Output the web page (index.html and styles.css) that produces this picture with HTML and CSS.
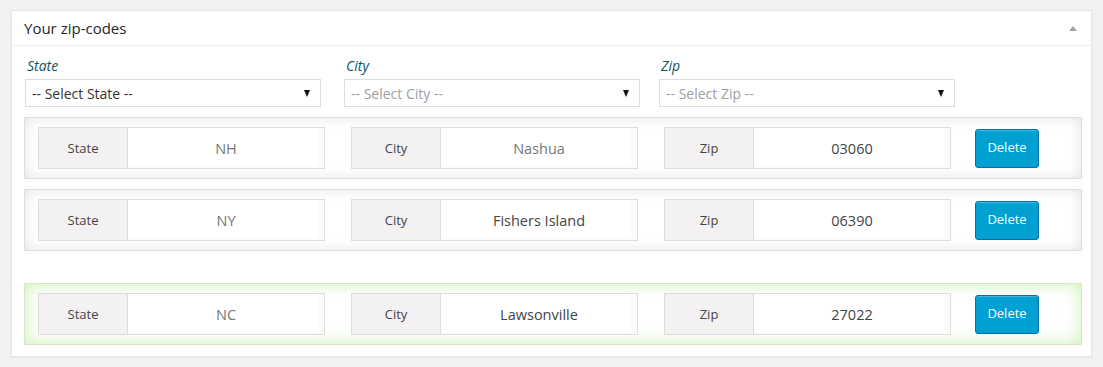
FILE: index.html
```html
<!DOCTYPE html>
<html>
<head>
  <meta charset="utf-8">
  <title>Your zip-codes</title>
  <link rel="stylesheet" href="styles.css">
</head>
<body>
  <div class="postbox">
    <div class="hndle">
      <span>Your zip-codes</span>
      <span class="toggle"></span>
    </div>
    <div class="inside">
      <div class="pickers">
        <div class="picker picker-state">
          <label>State</label>
          <div class="select">-- Select State --</div>
        </div>
        <div class="picker picker-city">
          <label>City</label>
          <div class="select disabled">-- Select City --</div>
        </div>
        <div class="picker picker-zip">
          <label>Zip</label>
          <div class="select disabled">-- Select Zip --</div>
        </div>
      </div>

      <div class="zip-row">
        <div class="group"><span class="addon">State</span><span class="value">NH</span></div>
        <div class="group"><span class="addon">City</span><span class="value">Nashua</span></div>
        <div class="group"><span class="addon">Zip</span><span class="value dark">03060</span></div>
        <button class="btn-delete">Delete</button>
      </div>
      <div class="zip-row">
        <div class="group"><span class="addon">State</span><span class="value">NY</span></div>
        <div class="group"><span class="addon">City</span><span class="value dark">Fishers Island</span></div>
        <div class="group"><span class="addon">Zip</span><span class="value dark">06390</span></div>
        <button class="btn-delete">Delete</button>
      </div>
      <div class="zip-row added">
        <div class="group"><span class="addon">State</span><span class="value">NC</span></div>
        <div class="group"><span class="addon">City</span><span class="value dark">Lawsonville</span></div>
        <div class="group"><span class="addon">Zip</span><span class="value dark">27022</span></div>
        <button class="btn-delete">Delete</button>
      </div>
    </div>
  </div>
</body>
</html>
```

FILE: styles.css
```css
html, body {
  margin: 0;
  background: #f1f1f1;
  font-family: "Open Sans", "Liberation Sans", sans-serif;
  color: #444;
}
body {
  padding: 10px 11px;
}
.postbox {
  background: #fff;
  border: 1px solid #e5e5e5;
  box-shadow: 0 1px 1px rgba(0,0,0,.04);
}
.hndle {
  display: flex;
  align-items: center;
  justify-content: space-between;
  height: 34px;
  padding: 0 14px 0 12px;
  border-bottom: 1px solid #eee;
  font-size: 15px;
  font-weight: 400;
  color: #23282d;
}
.toggle {
  width: 0;
  height: 0;
  border-left: 4px solid transparent;
  border-right: 4px solid transparent;
  border-bottom: 5px solid #a0a5aa;
  margin-top: 1px;
}
.inside {
  padding: 10px 9px 11px 12px;
}
.pickers {
  display: flex;
  height: 61px;
}
.picker label {
  display: block;
  font-style: italic;
  font-size: 14px;
  color: #0e5466;
  padding-left: 2px;
  line-height: 20px;
}
.picker-state { margin-left: 1px; }
.picker-city { margin-left: 23px; }
.picker-zip { margin-left: 19px; }
.select {
  position: relative;
  box-sizing: border-box;
  width: 296px;
  height: 28px;
  margin-top: 3px;
  border: 1px solid #ddd;
  padding-left: 6px;
  font-size: 14px;
  line-height: 27px;
  color: #333;
}
.select.disabled {
  color: #a0a0a0;
}
.select::after {
  content: "";
  position: absolute;
  right: 10px;
  top: 10px;
  border-left: 3.5px solid transparent;
  border-right: 3.5px solid transparent;
  border-top: 7px solid #111;
}
.zip-row {
  display: flex;
  align-items: center;
  box-sizing: border-box;
  height: 62px;
  margin-bottom: 10px;
  padding-left: 13px;
  border: 1px solid #ddd;
  background: #fff;
  box-shadow: inset 0 0 14px rgba(0,0,0,.11);
}
.zip-row.added {
  margin-top: 32px;
  margin-bottom: 0;
  box-shadow: inset 0 0 16px rgba(150,230,90,.5);
  border-color: #d6e6c8;
}
.group {
  display: flex;
  box-sizing: border-box;
  width: 287px;
  height: 42px;
  margin-right: 26px;
  border: 1px solid #ddd;
  font-size: 13px;
}
.addon {
  width: 88px;
  display: flex;
  align-items: center;
  justify-content: center;
  background: #f3f1f2;
  border-right: 1px solid #ddd;
  color: #444;
}
.value {
  flex: 1;
  display: flex;
  align-items: center;
  justify-content: center;
  background: #fff;
  box-shadow: inset -6px -2px 0 #fbfbfb, inset 2px 2px 0 #fff;
  font-size: 14.5px;
  color: #777;
}
.value.dark {
  color: #444;
}
.btn-delete {
  margin-left: -2px;
  width: 64px;
  height: 39px;
  background: #00a0d2;
  border: 1px solid #0073aa;
  border-radius: 3px;
  color: #fff;
  font-family: "Open Sans", "Liberation Sans", sans-serif;
  font-size: 13px;
  padding: 0 0 3px;
  box-shadow: inset 0 1px 0 rgba(120,200,230,.5);
}
```
